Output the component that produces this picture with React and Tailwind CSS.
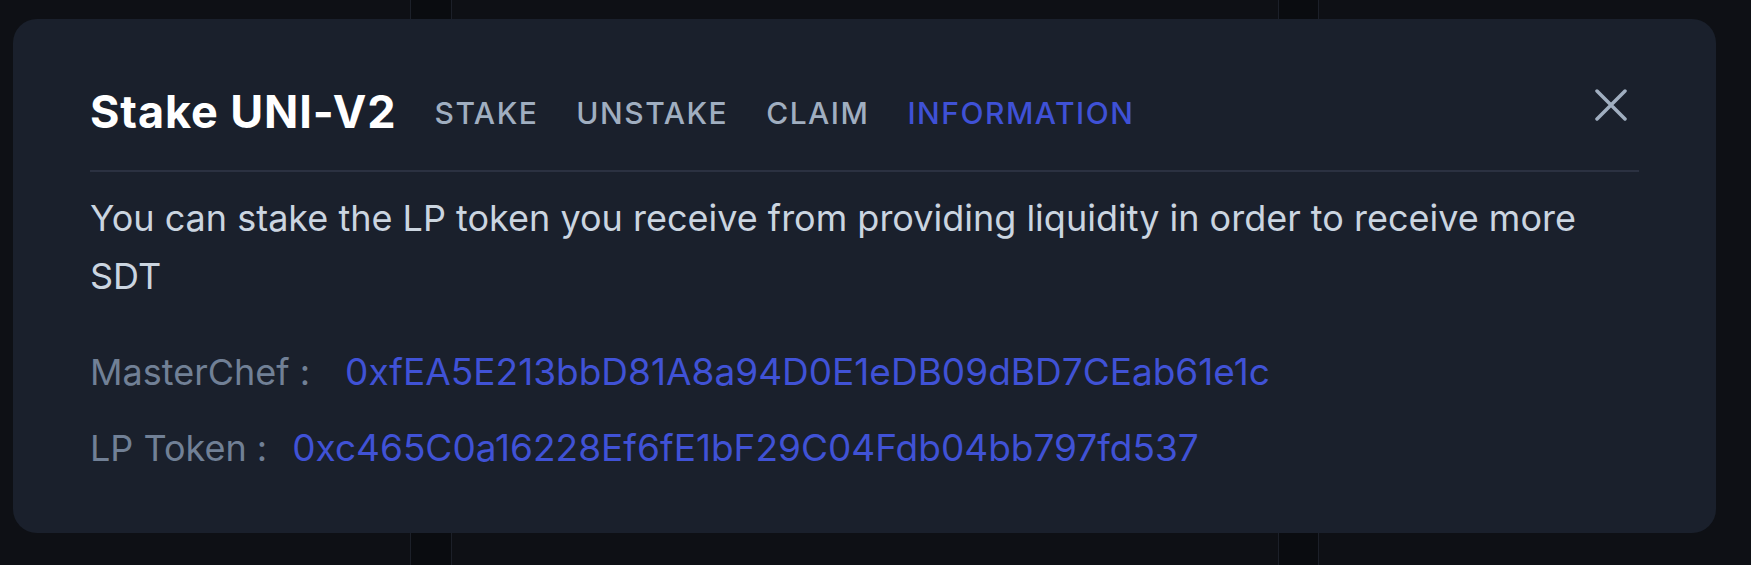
import React, { useState } from "react";

const tabs = ["STAKE", "UNSTAKE", "CLAIM", "INFORMATION"];

const CloseIcon = () => (
  <svg width="32" height="32" viewBox="0 0 32 32" fill="none">
    <path
      d="M2 2L30 30M30 2L2 30"
      stroke="currentColor"
      strokeWidth="3.5"
      strokeLinecap="round"
    />
  </svg>
);

const InfoRow = ({ label, value, gap }) => (
  <div className="flex items-baseline leading-[58px]">
    <span className="text-[36px] text-[#718096]">{label}</span>
    <span className={`text-[37px] text-[#4052d6] ${gap}`}>{value}</span>
  </div>
);

const StakeModal = () => {
  const [activeTab, setActiveTab] = useState("INFORMATION");

  return (
    <div className="absolute left-[13px] top-[19px] h-[514px] w-[1703px] rounded-[24px] bg-[#1a202c] px-[77px] pt-[64px]">
      <button className="absolute right-[89px] top-[70px] text-[#a0aec0]">
        <CloseIcon />
      </button>

      <div className="flex h-[56px] items-center gap-[38px]">
        <h2 className="text-[45px] font-bold leading-none tracking-[0.02em] text-white">
          Stake UNI-V2
        </h2>
        {tabs.map((tab) => (
          <button
            key={tab}
            onClick={() => setActiveTab(tab)}
            className={`mt-[4px] text-[30px] font-medium leading-none tracking-[0.05em] ${
              activeTab === tab ? "text-[#3f51d6]" : "text-[#a0aec0]"
            }`}
          >
            {tab}
          </button>
        ))}
      </div>

      <div className="mt-[31px] h-[2px] bg-[#2b3141]" />

      <p className="mt-[17px] text-[36px] leading-[58px] text-[#cbd5e0]">
        You can stake the LP token you receive from providing liquidity in
        order to receive more SDT
      </p>
      <div className="mt-[38px] flex flex-col gap-[18px]">
        <InfoRow
          label="MasterChef :"
          value="0xfEA5E213bbD81A8a94D0E1eDB09dBD7CEab61e1c"
          gap="ml-[35px]"
        />
        <InfoRow
          label="LP Token :"
          value="0xc465C0a16228Ef6fE1bF29C04Fdb04bb797fd537"
          gap="ml-[25px]"
        />
      </div>
    </div>
  );
};

export default function App() {
  return (
    <div className="relative h-[565px] w-full overflow-hidden bg-[#0e1015] font-['Inter',sans-serif]">
      {/* page columns behind the overlay */}
      <div className="flex h-full">
        <div className="w-[410px]" />
        <div className="w-[42px] border-x border-[#1c2029] bg-[#0a0c10]" />
        <div className="w-[826px]" />
        <div className="w-[41px] border-x border-[#1c2029] bg-[#0a0c10]" />
        <div className="flex-1" />
      </div>
      <StakeModal />
    </div>
  );
}
